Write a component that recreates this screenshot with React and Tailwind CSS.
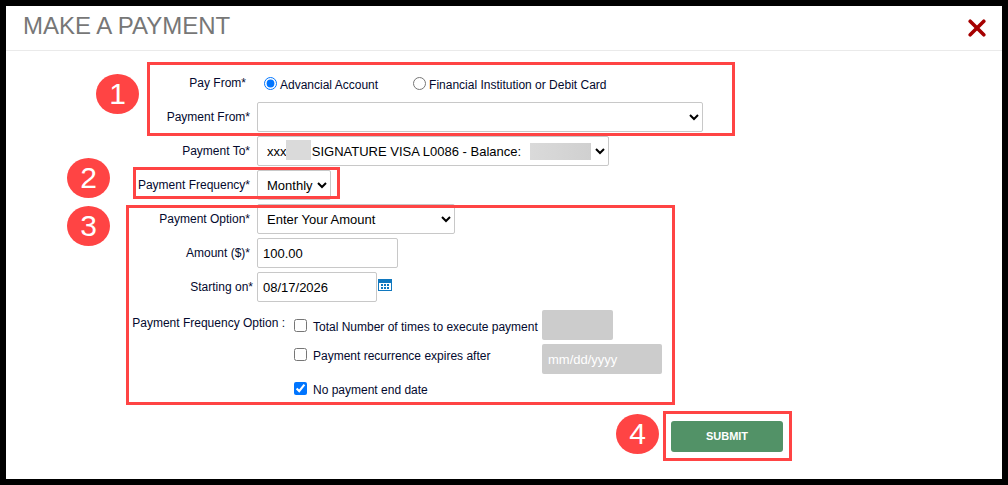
import React, { useState } from 'react';

const CONTROL = 'h-[30px] rounded-xs border border-[#c8c8c8] bg-white text-[13px] text-black';
const SELECT = `${CONTROL} pl-[5px]`;
const INPUT = `${CONTROL} px-[5px]`;
const DISABLED = 'h-[30px] rounded-xs bg-[#ccc] px-1.5 text-[13px] text-white placeholder:text-white';
const MASKED_CARD = 'xxx' + '\u00a0'.repeat(7) + 'SIGNATURE VISA L0086 - Balance:';

const Icons = {
  CloseIcon: (props) => (
    <svg {...props} viewBox="0 0 18 18" fill="none" stroke="currentColor" strokeWidth={3.6} strokeLinecap="round">
      <path d="M2.2 2.2l13.6 13.6M15.8 2.2L2.2 15.8" />
    </svg>
  ),
  CalendarIcon: (props) => (
    <svg {...props} viewBox="0 0 14 12" shapeRendering="crispEdges">
      <path fill="#1078bf" d="M0 0h14v12H0z" />
      <path fill="#fff" d="M1 4h12v7H1z" />
      <path fill="#1078bf" d="M3 5h2v2H3zM6 5h2v2H6zM9 5h2v2H9zM3 8h2v2H3zM6 8h2v2H6zM9 8h2v2H9z" />
    </svg>
  ),
};

const Frame = ({ className }) => (
  <div className={`pointer-events-none absolute border-3 border-[#ff4444] ${className}`} />
);

const Step = ({ number, className }) => (
  <span className={`absolute flex h-10 w-[43px] items-center justify-center rounded-[50%] bg-[#ff4444] text-[30px] text-white ${className}`}>
    {number}
  </span>
);

const Row = ({ label, htmlFor, children }) => (
  <div className="flex items-center gap-[7px]">
    <label htmlFor={htmlFor} className="w-[244px] text-right">{label}</label>
    {children}
  </div>
);

const App = () => {
  const [payment, setPayment] = useState({
    source: 'account',
    from: '',
    frequency: 'monthly',
    option: 'custom',
    amount: '100.00',
    start: '08/17/2026',
  });
  const [endRule, setEndRule] = useState('none');

  const handleChange = (e) => {
    const { name, value } = e.target;
    setPayment((prev) => ({ ...prev, [name]: value }));
  };

  const handleEndRule = (e) => setEndRule(e.target.value);

  return (
    <div className="min-h-screen border-6 border-black bg-white font-['Liberation_Sans',Arial,sans-serif] text-xs text-[#03092e]">
      <header className="flex h-[45px] items-center justify-between border-b border-[#eaeaea] pr-4 pl-[17px]">
        <h1 className="pb-1 text-2xl text-[#777]">MAKE A PAYMENT</h1>
        <button type="button" aria-label="Close" className="text-[#a60000]">
          <Icons.CloseIcon className="size-[18px]" />
        </button>
      </header>

      <form onSubmit={(e) => e.preventDefault()} className="flex flex-col gap-1 pt-[17px]">
        <div className="relative flex flex-col gap-1">
          <Frame className="-top-1.5 -bottom-1 left-[141px] w-[588px]" />
          <Step number="1" className="top-1.5 left-[90px]" />
          <div role="radiogroup" aria-labelledby="pay-from" className="flex h-[30px] items-center">
            <span id="pay-from" className="w-60 text-right">Pay From*</span>
            <label className="ml-[18px] flex items-center gap-[3px]">
              <input type="radio" name="source" value="account" checked={payment.source === 'account'} onChange={handleChange} className="size-[13px] accent-[#0075ff]" />
              <span className="pt-1">Advancial Account</span>
            </label>
            <label className="ml-[35px] flex items-center gap-[3px]">
              <input type="radio" name="source" value="external" checked={payment.source === 'external'} onChange={handleChange} className="size-[13px] accent-[#0075ff]" />
              <span className="pt-1">Financial Institution or Debit Card</span>
            </label>
          </div>
          <Row label="Payment From*" htmlFor="from">
            <select id="from" name="from" value={payment.from} onChange={handleChange} className={`${SELECT} w-[446px]`}>
              <option value=""></option>
            </select>
          </Row>
        </div>

        <Row label="Payment To*" htmlFor="to">
          <div className="relative">
            <select id="to" name="to" className={`${SELECT} w-[352px]`}>
              <option>{MASKED_CARD}</option>
            </select>
            <span className="absolute top-1 left-[29px] h-5 w-[25px] bg-[#dadada]" />
            <span className="absolute top-[7px] left-[273px] h-[17px] w-[61px] bg-linear-to-r from-[#dadada] to-[#d0d0d0]" />
          </div>
        </Row>

        <div className="relative">
          <Row label="Payment Frequency*" htmlFor="frequency">
            <select id="frequency" name="frequency" value={payment.frequency} onChange={handleChange} className={`${SELECT} w-[74px]`}>
              <option value="monthly">Monthly</option>
            </select>
          </Row>
          <Frame className="-top-[3px] bottom-px left-[127px] w-[207px]" />
          <Step number="2" className="-top-3 left-[61px]" />
        </div>

        <div className="relative flex flex-col gap-1">
          <Row label="Payment Option*" htmlFor="option">
            <select id="option" name="option" value={payment.option} onChange={handleChange} className={`${SELECT} w-[198px]`}>
              <option value="custom">Enter Your Amount</option>
            </select>
          </Row>
          <Row label="Amount ($)*" htmlFor="amount">
            <input type="text" id="amount" name="amount" value={payment.amount} onChange={handleChange} className={`${INPUT} w-[141px]`} />
          </Row>
          <div className="flex items-center">
            <label htmlFor="start" className="mr-1 w-[247px] text-right">Starting on*</label>
            <input type="text" id="start" name="start" value={payment.start} onChange={handleChange} className={`${INPUT} w-[120px]`} />
            <button type="button" aria-label="Choose start date" className="ml-px pb-1">
              <Icons.CalendarIcon className="h-3 w-3.5" />
            </button>
          </div>

          <div role="group" aria-labelledby="end-rule" className="flex pt-1">
            <span id="end-rule" className="w-[279px] pt-[5px] text-right">Payment Frequency Option :</span>
            <div className="ml-[9px] flex flex-col gap-1">
              <div className="flex items-center">
                <label className="flex w-[248px] items-center gap-1.5">
                  <input type="checkbox" value="count" checked={endRule === 'count'} onChange={handleEndRule} className="size-[13px] accent-[#0075ff]" />
                  <span className="pt-1">Total Number of times to execute payment</span>
                </label>
                <input type="text" aria-label="Number of payments" disabled className={`${DISABLED} w-[71px]`} />
              </div>
              <div className="flex items-start">
                <label className="flex w-[248px] items-center gap-1.5">
                  <input type="checkbox" value="date" checked={endRule === 'date'} onChange={handleEndRule} className="size-[13px] accent-[#0075ff]" />
                  <span className="pt-1">Payment recurrence expires after</span>
                </label>
                <input type="text" aria-label="Expiry date" placeholder="mm/dd/yyyy" disabled className={`${DISABLED} w-[120px]`} />
              </div>
              <label className="flex items-center gap-1.5">
                <input type="checkbox" value="none" checked={endRule === 'none'} onChange={handleEndRule} className="size-[13px] accent-[#0075ff]" />
                <span className="pt-1">No payment end date</span>
              </label>
            </div>
          </div>
          <Frame className="top-px -bottom-[7px] left-[120px] w-[549px]" />
          <Step number="3" className="top-0.5 left-[61px]" />
        </div>

        <div className="relative mt-[19px] ml-[665px] w-28">
          <button type="submit" className="h-[31px] w-full rounded-[3px] bg-[#529267] text-[11px] font-bold text-white">SUBMIT</button>
          <Frame className="-top-2.5 -right-[9px] -bottom-[9px] -left-2" />
          <Step number="4" className="-top-[7px] -left-[55px]" />
        </div>
      </form>
    </div>
  );
};

export default App;
